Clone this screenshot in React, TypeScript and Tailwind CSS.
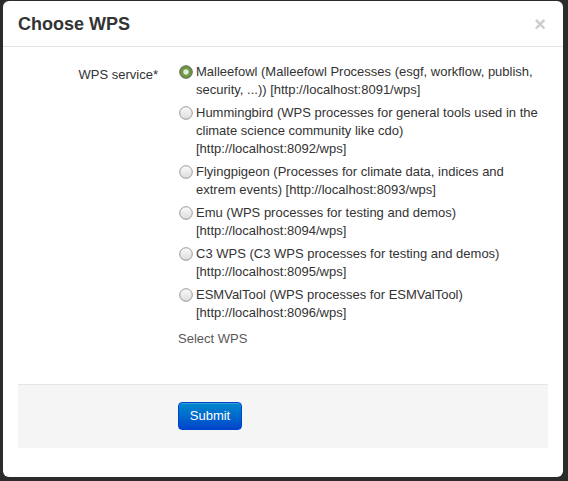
import React from "react";

const services = [
  {
    name: "Malleefowl",
    text: "Malleefowl (Malleefowl Processes (esgf, workflow, publish, security, ...)) [http://localhost:8091/wps]",
  },
  {
    name: "Hummingbird",
    text: "Hummingbird (WPS processes for general tools used in the climate science community like cdo) [http://localhost:8092/wps]",
  },
  {
    name: "Flyingpigeon",
    text: "Flyingpigeon (Processes for climate data, indices and extrem events) [http://localhost:8093/wps]",
  },
  {
    name: "Emu",
    text: "Emu (WPS processes for testing and demos) [http://localhost:8094/wps]",
  },
  {
    name: "C3 WPS",
    text: "C3 WPS (C3 WPS processes for testing and demos) [http://localhost:8095/wps]",
  },
  {
    name: "ESMValTool",
    text: "ESMValTool (WPS processes for ESMValTool) [http://localhost:8096/wps]",
  },
];

function Radio({ checked }: { checked: boolean }) {
  return (
    <svg width="14" height="14" viewBox="0 0 14 14" className="block">
      <defs>
        <linearGradient id="rg" x1="0" y1="0" x2="0" y2="1">
          <stop offset="0" stopColor="#fbfbfb" />
          <stop offset="1" stopColor="#dcdcdc" />
        </linearGradient>
      </defs>
      {checked ? (
        <>
          <circle cx="7" cy="7" r="6.3" fill="#6f9a3c" stroke="#5a5a5a" strokeWidth="0.9" />
          <circle cx="7" cy="7" r="3.2" fill="#e4e8df" stroke="#4f7a25" strokeWidth="0.6" />
        </>
      ) : (
        <circle cx="7" cy="7" r="6.3" fill="url(#rg)" stroke="#8d8d8d" strokeWidth="0.9" />
      )}
    </svg>
  );
}

export default function App() {
  const [selected, setSelected] = React.useState("Malleefowl");

  return (
    <div
      className="h-[481px] w-full bg-[#2b2b2b] pl-[3px] pt-[1px]"
      style={{ fontFamily: '"Liberation Sans", Arial, sans-serif' }}
    >
      <div className="h-[476px] w-[560px] rounded-[6px] bg-white">
        <div className="flex h-[46px] items-center justify-between border-b border-[#e5e5e5] pl-[15px] pr-[15px]">
          <h3 className="text-[18px] font-bold leading-[20px] text-[#333]">Choose WPS</h3>
          <button className="mr-[2px] text-[20px] font-bold leading-[20px] text-[#cccccc]">×</button>
        </div>

        <div className="px-[15px] pt-[16px]">
          <div className="flex">
            <label className="w-[140px] pt-[3px] text-right text-[13px] leading-[18px] text-[#333]">
              WPS service*
            </label>
            <div className="ml-[20px] mr-[6px] flex-1">
              {services.map((s) => (
                <label
                  key={s.name}
                  className="mb-[5px] flex cursor-pointer text-[13px] leading-[18px] text-[#333]"
                  onClick={() => setSelected(s.name)}
                >
                  <span className="mt-[2px] w-[18px] shrink-0 pl-[1px]">
                    <Radio checked={selected === s.name} />
                  </span>
                  <span>{s.text}</span>
                </label>
              ))}
              <p className="mt-[8px] text-[13px] leading-[18px] text-[#595959]">Select WPS</p>
            </div>
          </div>

          <div className="mt-[36px] h-[64px] border-t border-[#e5e5e5] bg-[#f5f5f5] pl-[160px] pt-[17px]">
            <button className="h-[28px] w-[64px] rounded-[4px] border border-[#0044cc] bg-gradient-to-b from-[#0088cc] to-[#0044cc] text-[13px] text-white shadow-[inset_0_1px_0_rgba(255,255,255,0.2)]">
              Submit
            </button>
          </div>
        </div>
      </div>
    </div>
  );
}
